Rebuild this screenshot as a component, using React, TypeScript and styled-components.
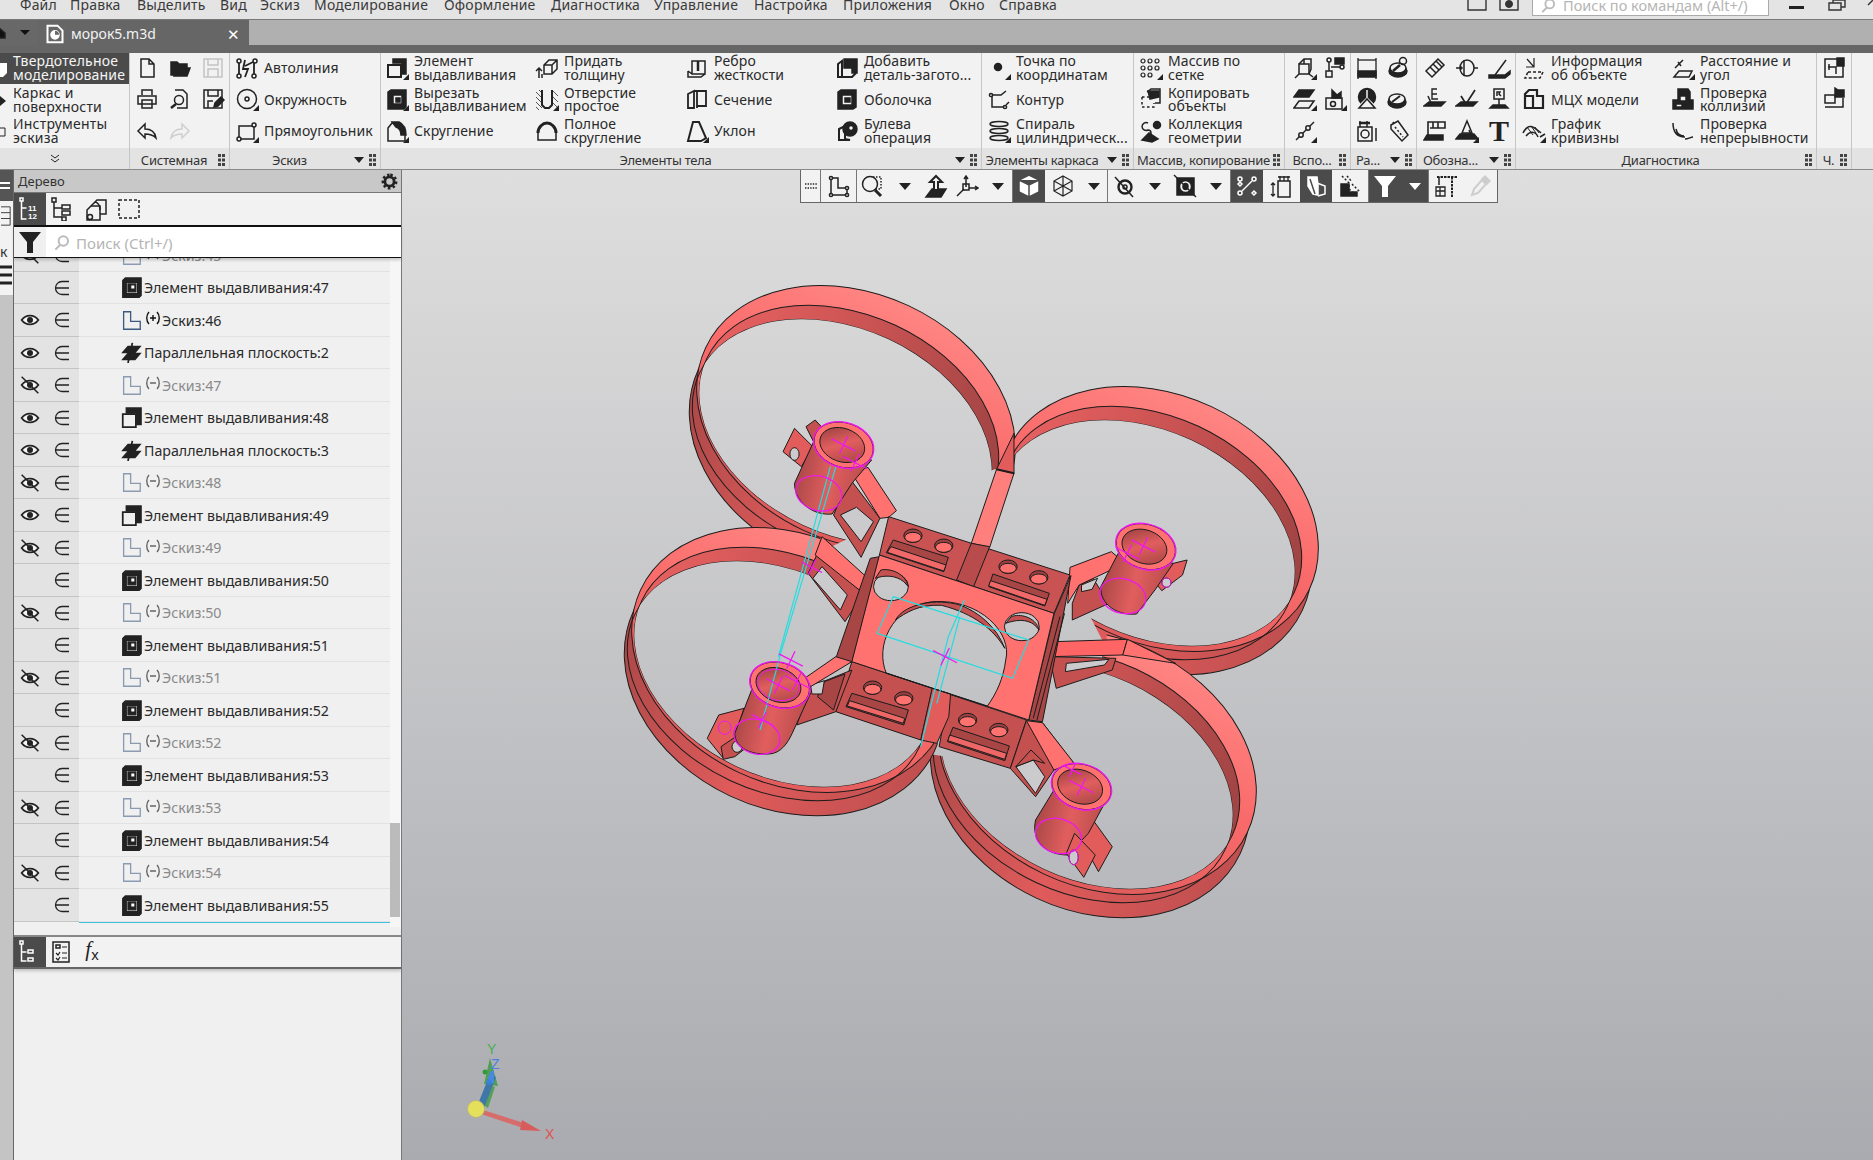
import React from 'react';
import styled, { createGlobalStyle } from 'styled-components';

const Global = createGlobalStyle`
  html, body { margin: 0; padding: 0; width: 1873px; height: 1160px; overflow: hidden; background: #f0f0f0; }
  body { font-family: "Noto Sans", "Open Sans", sans-serif; color: #222; }
`;

const FONT_STRETCH = '0.12px';

const Page = styled.div`
  width: 1873px; height: 1160px; display: flex; flex-direction: column; overflow: hidden;
`;
const MenuBar = styled.div`
  height: 19px; background: #e4e4e4; display: flex; align-items: flex-start; overflow: hidden; flex: none;
  border-bottom: 1px solid #777; padding-left: 20px; font-size: 14px;
`;
const MenuItem = styled.div<{ $w: number }>`
  width: ${p => p.$w}px; line-height: 20px; margin-top: -5px; color: #3a3a3a; white-space: nowrap; letter-spacing: 0.2px;
`;
const MenuRight = styled.div`
  margin-left: auto; display: flex; align-items: flex-start; height: 19px;
`;
const SysIcon = styled.svg<{ $mr: number; $w?: number }>`
  width: ${p => p.$w ?? 20}px; height: 11px; margin-right: ${p => p.$mr}px; flex: none;
`;
const CmdSearch = styled.div`
  width: 237px; height: 16px; box-sizing: border-box; background: #fff; border: 1px solid #aaa; border-top: 0; margin-right: 18px; display: flex; align-items: flex-end;
  font-size: 14.5px; color: #b5b5b5; padding-left: 8px; overflow: hidden; line-height: 20px; gap: 7px; white-space: nowrap;
`;
const TabStrip = styled.div`
  height: 25px; background: #b0b0b0; display: flex; flex: none;
`;
const TabHome = styled.div`
  width: 38px; background: #686868; display: flex; align-items: center; justify-content: space-between; padding: 0 8px 0 0; box-sizing: border-box;
`;
const Tab = styled.div`
  width: 211px; background: #666; color: #f2f2f2; display: flex; align-items: center; font-size: 14px; padding: 2px 9px 0 7px; box-sizing: border-box; gap: 6px;
`;
const TabClose = styled.span`
  margin-left: auto; font-size: 15px; color: #fff;
`;
const DarkStrip = styled.div`
  height: 8px; background: #666; flex: none;
`;
const Ribbon = styled.div`
  height: 116px; display: flex; background: #f2f2f2; flex: none; border-bottom: 1px solid #8a8a8a;
`;
const Group = styled.div<{ $w: number }>`
  width: ${p => p.$w}px; flex: none; display: flex; flex-direction: column; border-right: 1px solid #c6c6c6; box-sizing: border-box;
`;
const GroupBody = styled.div<{ $cols: string; $pad?: number }>`
  height: 96px; margin-top: -1px; display: grid; grid-template-rows: repeat(3, 31.5px); grid-auto-flow: column;
  grid-template-columns: ${p => p.$cols}; padding-left: ${p => p.$pad || 0}px;
`;
const GroupFooter = styled.div`
  height: 21px; box-sizing: border-box; padding-top: 2px; background: #e3e3e3; display: flex; align-items: center; font-size: 13px; color: #333; padding-right: 3px; letter-spacing: -0.25px;
`;
const FooterLabel = styled.div`
  flex: 1; text-align: center; white-space: nowrap; overflow: hidden;
`;
const Item = styled.div<{ $pad?: number }>`
  display: flex; align-items: center; gap: 5px; padding-left: ${p => p.$pad ?? 4}px; min-width: 0;
`;
const IconCell = styled.div`
  display: flex; align-items: center; justify-content: center;
`;
const ItemText = styled.div`
  font-size: 14px; line-height: 13.5px; color: #2a2a2a; white-space: pre-line; letter-spacing: ${FONT_STRETCH};
`;
const ModeCol = styled.div`
  width: 130px; flex: none; display: flex; flex-direction: column; border-right: 1px solid #c6c6c6; box-sizing: border-box;
`;
const ModeRow = styled.div<{ $on?: boolean }>`
  height: 31px; box-sizing: border-box; padding: 0 0 ${p => (p.$on ? 2 : 0)}px 13px; display: flex; align-items: center; font-size: 14px; line-height: 13.5px; white-space: pre-line; position: relative;
  background: ${p => (p.$on ? '#4b4b4b' : 'transparent')}; color: ${p => (p.$on ? '#f5f5f5' : '#2a2a2a')}; letter-spacing: 0.2px;
`;
const ModeChevrons = styled.div`
  margin-top: auto; height: 21px; background: #e3e3e3; display: flex; align-items: center; justify-content: center; padding-right: 20px;
`;
const ModeStub = styled.svg`
  position: absolute; left: 0; top: 9px; width: 7px; height: 16px;
`;
const RibbonRest = styled.div`
  flex: 1; display: flex; flex-direction: column; justify-content: flex-end;
`;
const RestFoot = styled.div`
  height: 21px; background: #e3e3e3;
`;
const Main = styled.div`
  flex: 1; display: flex; min-height: 0;
`;
const Gutter = styled.div`
  width: 13px; flex: none; background: #c4c4c4; border-right: 1px solid #666; display: flex; flex-direction: column;
`;
const GutterTop = styled.div`
  height: 31px; background: #555; display: flex; align-items: center;
`;
const GutterWhite = styled.div`
  height: 94px; background: #f2f2f2; display: flex; flex-direction: column; align-items: flex-start; font-size: 14px; color: #333; overflow: hidden;
`;
const GutterGlyph = styled.span`
  margin-top: 18px; line-height: 16px;
`;
const TreePanel = styled.div`
  width: 388px; flex: none; display: flex; flex-direction: column; background: #f0f0f0; border-right: 1px solid #777; box-sizing: border-box;
`;
const TreeHead = styled.div`
  height: 22px; background: #c8c8c8; border-bottom: 1px solid #777; display: flex; align-items: center; padding: 0 3px 0 4px; font-size: 13px; color: #333; justify-content: space-between; flex: none;
`;
const ToolRow = styled.div`
  height: 32px; display: flex; flex: none; background: #f2f2f2; gap: 0;
`;
const ToolBtn = styled.div<{ $on?: boolean; $w?: number }>`
  width: ${p => p.$w ?? 32}px; display: flex; align-items: center; justify-content: center; background: ${p => (p.$on ? '#4b4b4b' : 'transparent')}; color: ${p => (p.$on ? '#fff' : '#222')};
`;
const SearchRow = styled.div`
  height: 30px; flex: none; display: flex; border-top: 2px solid #111; border-bottom: 1px solid #111; box-shadow: 0 2px 3px rgba(0, 0, 0, .2); position: relative; z-index: 2;
`;
const FilterBox = styled.div`
  width: 32px; background: #f0f0f0; display: flex; align-items: center; justify-content: center;
`;
const SearchField = styled.div`
  flex: 1; background: #fff; display: flex; align-items: center; gap: 6px; padding: 2px 0 0 8px; color: #b4b4b4; font-size: 15px;
`;
const TreeList = styled.div`
  height: 669px; display: flex; flex: none; overflow: hidden;
`;
const Rows = styled.div`
  width: 376px; flex: none; display: flex; flex-direction: column; margin-top: -18.75px;
`;
const Row = styled.div`
  height: 32.5px; flex: none; box-sizing: border-box; display: flex; border-bottom: 1px solid #e2e2e2;
`;
const RowCtl = styled.div`
  width: 65px; flex: none; background: #e3e3e3; display: flex; align-items: center; margin-bottom: -1px; border-bottom: 1px solid #c4c4c4; padding-left: 6px; box-sizing: border-box; gap: 13px;
`;
const RowMain = styled.div<{ $dim?: boolean }>`
  flex: 1; display: flex; align-items: center; padding-left: 42px; color: ${p => (p.$dim ? '#8a8a8a' : '#2a2a2a')}; font-size: 14.2px; white-space: nowrap; gap: 2px;
`;
const Sign = styled.svg`
  width: 16px; height: 16px; margin-bottom: 4px; margin-left: 1px; margin-right: -1px;
`;
const EndLine = styled.div`
  height: 1px; margin-left: 65px; background: #3ec0dc; flex: none;
`;
const Track = styled.div`
  flex: 1; background: #f6f6f6; display: flex; flex-direction: column; justify-content: flex-end; padding-bottom: 10px;
`;
const Thumb = styled.div`
  height: 94px; width: 10px; background: #bbb;
`;
const TreeGap = styled.div`
  height: 8px; flex: none; border-bottom: 2px solid #888;
`;
const BottomTools = styled.div`
  height: 30px; flex: none; display: flex; background: #f2f2f2; border-bottom: 2px solid #666; box-shadow: 0 2px 3px rgba(0, 0, 0, .2);
`;
const Viewport = styled.div`
  flex: 1; position: relative; background: linear-gradient(#dedede, #aaabb0); overflow: hidden;
`;
const Canvas = styled.svg`
  display: block; width: 100%; height: 100%;
  .z * { vector-effect: non-scaling-stroke; }
`;
const FloatBar = styled.div`
  position: absolute; left: 398px; top: 0; height: 32px; display: flex; background: #f2f2f2; border: 1px solid #666; border-top: 0;
`;
const FloatBtn = styled.div<{ $w: number; $on?: boolean; $sep?: boolean }>`
  width: ${p => p.$w}px; box-sizing: border-box; display: flex; align-items: center; justify-content: center;
  background: ${p => (p.$on ? '#4b4b4b' : 'transparent')}; border-left: ${p => (p.$sep ? '1px solid #777' : '0')};
`;

const S = styled.svg<{ $s?: number }>`
  width: ${p => p.$s ?? 24}px; height: ${p => p.$s ?? 24}px; flex: none; fill: none; stroke: #222; stroke-width: 1.5; display: block;
`;
const BigT = styled.span`
  font-family: "Liberation Serif", serif; font-weight: 700; font-size: 30px; line-height: 24px; color: #222;
`;
const FxMark = styled.span`
  font-family: "Liberation Serif", serif; font-style: italic; font-size: 21px; line-height: 20px; color: #222;
  sub { font-style: normal; font-family: "Liberation Sans", sans-serif; font-size: 15px; vertical-align: -4px; }
`;

const K = '#222';
const icons: Record<string, React.ReactNode> = {
  doc: <path d="M6 3h8l5 5v13H6zM14 3v5h5" />,
  folder: <path fill={K} d="M3 6h6l2 2h8v3H9l-3 8H3zM9 12h13l-3 8H6z" />,
  saveG: <g stroke="#c4c4c4"><path d="M3 3h18v18H3zM7 3v6h10V3M7 21v-8h10v8" /></g>,
  print: <path d="M7 8V3h10v5M3 9h18v8H3zM7 13h10v8H7z" />,
  preview: <><path d="M7 3h8l4 4v14H9" /><circle cx="11" cy="13" r="4.5" /><path d="M8 17l-5 4" strokeWidth="2.5" /></>,
  saveAs: <><path d="M3 3h18v18H3zM7 3v6h10V3M7 21v-7h5" /><path fill={K} d="M13 20l1-4 6-6 3 3-6 6z" /></>,
  undo: <path d="M10 5L3 12l7 7v-4c5 0 8 1 11 4-1-6-5-9-11-9z" />,
  redo: <path stroke="#cfcfcf" d="M14 5l7 7-7 7v-4c-5 0-8 1-11 4 1-6 5-9 11-9z" />,
  autoline: <><circle cx="4" cy="20" r="2" /><circle cx="20" cy="5" r="2" /><circle cx="19" cy="20" r="2" /><circle cx="4" cy="5" r="2" /><path d="M4 7v11M18 6l-8 4M10 4L8 13h5l-3 8M19 7v11" strokeWidth="1.8" /></>,
  circle: <><circle cx="12" cy="12" r="9.5" /><circle cx="12" cy="12" r="2" /></>,
  rect: <><path d="M4 7h15v13H4z" /><circle cx="19" cy="6" r="2" fill="#f2f2f2" /><circle cx="4" cy="20" r="2" fill="#f2f2f2" /></>,
  extrude: <><path fill={K} d="M8 3h13v15h-4V7H8z" /><path strokeWidth="2" d="M3 9h13v12H3z" /></>,
  cut: <><path fill={K} d="M3 5l3-2h15v17l-2 2H3z" /><path fill="#f2f2f2" d="M8 8h9v9H8z" /><path fill={K} d="M11 11h4v4h-4z" /></>,
  fillet: <><path d="M3 9l4-5h7l6 12v6H3z" /><path fill={K} d="M7 3h7c4 2 7 7 7 13h-5c0-4-2-7-5-8z" /></>,
  thick: <><path d="M9 9l5-5h8v9l-5 5H9zM9 9h8v9M17 9l5-5" /><path d="M4 22V12M1 15l3-3 3 3M7 18v4" /></>,
  hole: <><path d="M1 5l6 6M1 10l6 6M1 15l6 6M1 20l3 3M4 3l3 3M17 3l6 6M17 9l6 6M17 15l6 6" strokeWidth="1" stroke="#555" /><path strokeWidth="2" d="M7 3v15l3 3h4l3-3V3" /></>,
  fullround: <><path strokeWidth="1.5" d="M3 21v-7c0-6 5-10 9-10s9 4 9 10v7z" /><path strokeWidth="3" d="M3 14c0-6 5-10 9-10s9 4 9 10" /></>,
  rib: <><path d="M7 5h13v13H7zM3 15l4 3M3 15v6h13l4-3M3 21" /><path d="M13 5v10" strokeWidth="2.5" /></>,
  section: <path strokeWidth="1.8" d="M3 7l6-3v17l-6 0zM9 4h12v15H12M12 4v17" />,
  draft: <path strokeWidth="2" d="M8 3h6l7 16-5 3H3z" />,
  addpart: <><path strokeWidth="2" d="M3 8l4-3v16H3zM7 21h10l4-4" /><path fill={K} d="M9 3h13v14h-5v-5H9z" /></>,
  shell: <><path fill={K} d="M3 5l3-2h15v17l-3 2H3z" /><path fill="#f2f2f2" d="M7 8h10v10H7z" /><path fill={K} d="M10 11h5v4h-5z" /></>,
  boolean: <><path strokeWidth="2" d="M4 10l6-3v13l5 1H4z" /><circle cx="15" cy="10" r="7" fill={K} /><circle cx="16" cy="9" r="2.5" fill="#f2f2f2" /></>,
  point: <circle cx="11" cy="11" r="3.5" fill={K} />,
  contour: <><circle cx="4" cy="8" r="1.6" /><circle cx="18" cy="20" r="1.6" /><path d="M6 8h8l5-4M5 9v11h11M19 18l3-3" /></>,
  spiral: <><ellipse cx="12" cy="5" rx="9" ry="2.5" /><ellipse cx="12" cy="12" rx="9" ry="2.5" /><ellipse cx="12" cy="19" rx="9" ry="2.5" /></>,
  grid: <g strokeWidth="1.2">{[4, 11, 18].map(x => [5, 12, 19].map(y => (x === 18 && y === 19 ? null : <circle key={`${x}${y}`} cx={x} cy={y} r="2" />)))}</g>,
  copy: <><path strokeDasharray="2.5 2.5" d="M3 10h7M3 10v10h12v-4" /><path strokeWidth="1.5" d="M8 5l4-3h9v14h-5" /><path fill={K} d="M9 4h11v6l-9 2z" /></>,
  coll: <><circle cx="18" cy="6" r="3.5" fill={K} /><path d="M9 4a4 4 0 1 0 0 7 3 3 0 1 1 0 6" /><path fill={K} d="M3 21l7-7 9 6-6 3z" /></>,
  axis1: <><path d="M6 8h10v10H6zM11 3l0 5M2 22l4-4M16 18l4 3" /><path d="M6 8l5-5h7v10l-2 5" /></>,
  branch: <><circle cx="6" cy="4" r="2" /><circle cx="19" cy="11" r="2" /><path d="M6 6v9M8 11h9" /><rect x="3" y="15" width="6" height="6" /><path fill={K} d="M12 2h9v6h-9z" /></>,
  planes: <><path fill={K} d="M6 3h15l-5 7H1z" /><path d="M6 14h15l-5 7H1z" /></>,
  csys: <><rect x="3" y="11" width="16" height="11" /><circle cx="10" cy="17" r="2.5" /><path fill={K} d="M9 3l5 5 4-3v6h-9z" /></>,
  line3: <><path d="M3 21L21 3" /><circle cx="8" cy="16" r="2.2" fill="#f2f2f2" /><circle cx="15" cy="9" r="2.2" fill="#f2f2f2" /></>,
  dim1: <><path d="M3 2v21M21 2v21" strokeWidth="1.3" /><path fill={K} d="M3 15h18v6H3z" /><path d="M3 4h18" strokeWidth="1.3" /></>,
  rough: <><ellipse cx="11" cy="15" rx="9" ry="6" fill={K} /><ellipse cx="11" cy="12" rx="8" ry="5" fill="#f2f2f2" /><path strokeWidth="2.5" d="M6 15l7-6" /><circle cx="16" cy="5" r="3.5" /></>,
  bolt: <><circle cx="12" cy="10" r="8.5" fill={K} /><path stroke="#f2f2f2" d="M12 3v8M12 11l-6 6M12 11l6 6" /><path strokeWidth="1.5" d="M4 21l8-9 8 9z" fill="#f2f2f2" /></>,
  radius: <><ellipse cx="10" cy="15" rx="9" ry="6" fill={K} /><ellipse cx="10" cy="12" rx="8" ry="5" fill="#f2f2f2" /><path strokeWidth="2" d="M5 15l8-6" /></>,
  size3: <><path d="M3 8h14v14H3zM5 2v6M12 2v6M21 9v13" /><path strokeWidth="2.5" d="M4 4h11" /><circle cx="10" cy="15" r="4" /></>,
  hatch: <><path d="M4 6l7-4 10 14-6 6L4 10z" /><path d="M8 8l8 10M7 3l-3 3" strokeDasharray="2 2" /></>,
  thread: <><path d="M3 15L15 3l6 6L9 21z" /><path d="M7 11l6 6M10 8l6 6M13 5l6 6" /></>,
  cyl: <><ellipse cx="12" cy="12" rx="7" ry="8" /><path d="M1 12h4M19 12h4M9 4v16" /><circle cx="6" cy="12" r="1" /></>,
  mark: <><path fill={K} d="M2 19h16l5-4v3l-5 4H2z" /><path d="M8 19L19 4" /></>,
  markE: <><path fill={K} d="M1 19h17l4-4H6z" /><path d="M9 18L5 9" /><path d="M14 2H9v10h6M9 7h5" strokeWidth="1.4" /></>,
  markV: <><path fill={K} d="M1 19h17l4-4H6z" /><path d="M6 9l5 8L20 3" strokeWidth="1.7" /></>,
  markR: <><path fill={K} d="M3 21l3-3h12l3 3z" /><path d="M12 18v-6M7 2h10v10H7z" /><path d="M10 9V5h3l-1 2 2 2" /></>,
  markH: <><path fill={K} d="M1 21l3-5h16v5z" /><path d="M5 16V3h17v6H7M10 3v6M15 3v6" strokeWidth="1.6" /></>,
  tri1: <><path fill={K} d="M1 20l4-5h14l4 5z" /><path d="M12 2l5 12H7z" fill="#f2f2f2" /><path d="M14 11l3 7" /></>,
  info: <><path d="M5 3l7 8M4 11h8v-9" strokeWidth="1.2" /><path strokeDasharray="3 2" d="M6 16h15l-3 6H3z" /></>,
  mass: <path strokeWidth="2.2" d="M3 7l4-4h8v6h6v12H3zM3 9h8v12" />,
  curv: <><path d="M1 14c6-12 12-5 18 0M4 17c5-6 10-4 12 1M18 18l5-3" /><path d="M5 8l6 8M9 7l5 7M13 8l4 6" strokeWidth="1" /></>,
  dist: <><path d="M3 21h15l3-6H8zM4 12l8-8M7 6l3 4" /></>,
  coll2: <><path fill={K} d="M7 2h10l2 3v8h3v9H2v-9h5z" /><path fill="#f2f2f2" d="M9 9h6v5H9z" /><path fill="#f2f2f2" d="M5 17h6v3H5z" /></>,
  cont: <path d="M2 4c0 9 4 14 12 14M22 18c-2 0-5 2-8 2M5 10c1 5 4 7 8 7" />,
  chT: <><path d="M3 3h18v18H3z" /><path fill={K} d="M15 2h7v8h-7z" /><path d="M6 11h8v7M7 8v6" /></>,
  chF: <><path d="M3 20h18v-9M3 8h10v8H3z" /><path fill={K} d="M13 1l3 2h6v7h-9z" /></>,
  sketch: <path d="M3 2h8v11h11v9H3z" stroke="#3b5a80" />,
  sketchD: <path d="M3 2h8v11h11v9H3z" stroke="#8a9ab0" />,
  feature: <><path fill={K} d="M2 4l3-3h18v20l-3 3H2z" /><path fill="#f2f2f2" d="M6 6h13v13H6z" /><path fill={K} d="M8 8h9v9H8z" /><path fill="#fff" d="M11 9h5v5h-5z" /></>,
  feature2: <><path fill={K} d="M6 1h17v19h-5V7H6z" /><path strokeWidth="2" d="M2 8h15v15H2z" /></>,
  plane: <><path fill={K} d="M2 12l6-7h14l-6 7zM2 20l6-7h14l-6 7z" /><path d="M13 1l-5 23" strokeWidth="2" /></>,
  treeA: <g stroke="#fff"><rect x="2" y="1" width="3" height="3" /><path d="M3.5 4v18h5M3.5 11h5" /><text x="10" y="14" fontSize="8" fontWeight="700" fill="#fff" stroke="none" fontFamily="'Liberation Sans', sans-serif">11</text><text x="10" y="22" fontSize="8" fontWeight="700" fill="#fff" stroke="none" fontFamily="'Liberation Sans', sans-serif">12</text></g>,
  treeB: <><rect x="2" y="1" width="4" height="4" /><path d="M4 5v15h8M4 11h8" /><rect x="12" y="8" width="8" height="4" /><rect x="12" y="14" width="8" height="4" /><rect x="12" y="20" width="4" height="4" /></>,
  treeC: <><path d="M7 9l6-6h9v14h-6" /><path d="M3 13l4-4h9v14H3z" /><path d="M11 5c4 1 5 5 5 8" /><circle cx="6" cy="20" r="2.5" /></>,
  treeD: <rect x="2" y="3" width="20" height="18" strokeDasharray="3 2" />,
  tab1: <g stroke="#fff"><rect x="2" y="1" width="3" height="3" /><path d="M3.5 4v17h5M3.5 12h5" /><rect x="10" y="10" width="5" height="3" /><rect x="10" y="18" width="5" height="3" /></g>,
  tab2: <><path d="M4 2h16v20H4z" /><rect x="7" y="5" width="4" height="3" /><path d="M13 7h5M7 13l2 2 2-3M13 13h5M7 18l2 2 2-3M13 18h5" strokeWidth="1.2" /></>,
  funnel: <path fill={K} stroke="none" d="M1 2h22l-8 10v11h-6V12z" />,
  funnelW: <path fill="#fff" stroke="none" d="M1 2h22l-8 10v11h-6V12z" />,
  fbSketch: <><circle cx="4" cy="4" r="1.6" /><circle cx="20" cy="21" r="1.6" /><circle cx="4" cy="21" r="1.6" /><circle cx="20" cy="14" r="1.6" /><path d="M4 6v13M6 21h12M20 16v3M18 14h-7V4H6" /></>,
  fbZoom: <><circle cx="9" cy="10" r="7.5" /><path strokeDasharray="1.5 1.5" d="M12 3h8v12h-6" /><path strokeWidth="3" d="M14 16l6 6" /></>,
  fbUp: <><path fill={K} d="M8 15h14l-5 8H2z" /><path strokeWidth="2" d="M10 15V8H6l6-6 6 6h-4v7" fill="#f2f2f2" /></>,
  fbAxes: <><path d="M11 2v11M9 5l2-3 2 3M14 14h9M20 12l3 2-3 2M9 15l-7 7" /><rect x="8" y="10" width="6" height="6" /></>,
  fbCube: <path fill="#fff" stroke="#4b4b4b" strokeWidth="1.5" d="M12 1l10 5v12l-10 5-10-5V6zM2 6l10 5 10-5M12 11v12" />,
  fbWire: <path strokeWidth="1.2" d="M12 2l9 5v10l-9 5-9-5V7zM3 7l18 10M21 7L3 17M12 2v20" />,
  fbEye: <><path d="M2 3l18 20" strokeWidth="1.5" /><circle cx="12" cy="13" r="6.5" strokeWidth="2.4" /><circle cx="12" cy="13" r="2" /></>,
  fbEyeB: <><path fill={K} d="M4 4h17v17H4z" /><ellipse cx="12.5" cy="12.5" rx="6" ry="6" fill="#f2f2f2" /><ellipse cx="12.5" cy="12.5" rx="2.5" ry="3" fill={K} /><path d="M1 1l22 22" /></>,
  fbNodes: <g stroke="#fff"><circle cx="5" cy="5" r="2" /><circle cx="19" cy="5" r="2" /><path d="M17 7L7 17" /><circle cx="5" cy="19" r="2" /><path d="M17 19l2-2 2 2-2 2z" /><path d="M3 10l2-2 2 2-2 2z" /></g>,
  fbDim: <><path d="M8 7h12v16H8z" /><path d="M8 3h12M10 2v5M14 2v5M18 2v5M3 9v13M1 11l2-2 2 2M1 20l2 2 2-2" strokeWidth="1.3" /></>,
  fbSolid: <g stroke="#fff"><path fill="#fff" d="M4 3h9l1 8v10L9 20 4 12z" /><path d="M13 9l8 3v8l-7 2" /><path stroke="#4b4b4b" d="M6 5l5 15" /></g>,
  fbLay: <><path fill={K} d="M3 10h8v8h8v4H3z" /><path strokeDasharray="2 2" d="M4 2l7 7v6l9 8M9 2l5 6" /><path d="M14 10l8 8" strokeDasharray="2 2" /></>,
  fbCrane: <><path strokeWidth="2" d="M3 3h20M18 3v20" strokeDasharray="2.5 1" /><path d="M5 3v8" /><path d="M2 13h9v9H2zM2 17h9M6 13v9" strokeWidth="1.3" /></>,
  fbPipe: <g stroke="#cdcdcd"><path strokeWidth="2" d="M4 21l2-6 8-9 4 4-8 9z" /><path fill="#cdcdcd" d="M14 5l3-3 5 5-3 3z" /></g>,
};

const Ico: React.FC<{ n: string; more?: boolean; s?: number }> = ({ n, more, s }) => (
  <S $s={s} viewBox="0 0 24 24">
    {icons[n]}
    {more && <path fill={K} stroke="none" d="M18 24l6-6v6z" />}
  </S>
);

const Tri = styled.span<{ $light?: boolean }>`
  width: 0; height: 0; border-left: 6px solid transparent; border-right: 6px solid transparent; border-top: 7px solid ${p => (p.$light ? '#fff' : '#222')}; display: block;
`;
const FootTri = styled(Tri)`
  border-left-width: 5px; border-right-width: 5px; border-top-width: 6px; margin: 0 5px; flex: none;
`;
const GripDots = styled.svg`
  width: 7px; height: 12px; flex: none; margin-right: 1px;
`;
const Grip = () => (
  <GripDots viewBox="0 0 7 12">
    {[0, 4].map(x => [0, 4.5, 9].map(y => <rect key={`${x}${y}`} x={x} y={y} width="3" height="3" fill="#444" />))}
  </GripDots>
);
const Foot: React.FC<{ t: string; drop?: boolean; grip?: boolean }> = ({ t, drop, grip = true }) => (
  <GroupFooter>
    <FooterLabel>{t}</FooterLabel>
    {drop && <FootTri />}
    {grip && <Grip />}
  </GroupFooter>
);

const IconItem: React.FC<{ n: string; more?: boolean }> = ({ n, more }) => (
  <IconCell>{n ? <Ico n={n} more={more} /> : null}</IconCell>
);
const TextItem: React.FC<{ n: string; t: string; more?: boolean; pad?: number }> = ({ n, t, more, pad }) => (
  <Item $pad={pad}>
    <Ico n={n} more={more} />
    <ItemText>{t}</ItemText>
  </Item>
);

const menu: [string, number][] = [
  ['Файл', 50], ['Правка', 67], ['Выделить', 83], ['Вид', 40], ['Эскиз', 54], ['Моделирование', 130], ['Оформление', 107],
  ['Диагностика', 103], ['Управление', 100], ['Настройка', 89], ['Приложения', 106], ['Окно', 50], ['Справка', 70],
];

type RowT = { t: string; kind: 'f' | 'f2' | 's' | 'p'; eye?: 'on' | 'off'; sign?: '+' | '-' };
const rows: RowT[] = [
  { t: 'Эскиз:45', kind: 's', eye: 'off', sign: '-' },
  { t: 'Элемент выдавливания:47', kind: 'f' },
  { t: 'Эскиз:46', kind: 's', eye: 'on', sign: '+' },
  { t: 'Параллельная плоскость:2', kind: 'p', eye: 'on' },
  { t: 'Эскиз:47', kind: 's', eye: 'off', sign: '-' },
  { t: 'Элемент выдавливания:48', kind: 'f2', eye: 'on' },
  { t: 'Параллельная плоскость:3', kind: 'p', eye: 'on' },
  { t: 'Эскиз:48', kind: 's', eye: 'off', sign: '-' },
  { t: 'Элемент выдавливания:49', kind: 'f2', eye: 'on' },
  { t: 'Эскиз:49', kind: 's', eye: 'off', sign: '-' },
  { t: 'Элемент выдавливания:50', kind: 'f' },
  { t: 'Эскиз:50', kind: 's', eye: 'off', sign: '-' },
  { t: 'Элемент выдавливания:51', kind: 'f' },
  { t: 'Эскиз:51', kind: 's', eye: 'off', sign: '-' },
  { t: 'Элемент выдавливания:52', kind: 'f' },
  { t: 'Эскиз:52', kind: 's', eye: 'off', sign: '-' },
  { t: 'Элемент выдавливания:53', kind: 'f' },
  { t: 'Эскиз:53', kind: 's', eye: 'off', sign: '-' },
  { t: 'Элемент выдавливания:54', kind: 'f' },
  { t: 'Эскиз:54', kind: 's', eye: 'off', sign: '-' },
  { t: 'Элемент выдавливания:55', kind: 'f' },
];

const EyeSlot = styled.div`
  width: 20px; height: 20px; flex: none;
`;
const Eye: React.FC<{ off?: boolean }> = ({ off }) => (
  <S $s={20} viewBox="0 0 24 24">
    <path d="M2 12c5-7 15-7 20 0-5 7-15 7-20 0z" strokeWidth="2.2" fill="#f5f5f5" />
    <circle cx="12" cy="12" r="3.6" fill={K} stroke="none" />
    {off && <path d="M2 2l20 20" strokeWidth="1.8" />}
  </S>
);
const Member = () => (
  <S $s={18} viewBox="0 0 18 18" style={{ strokeWidth: 1.3 }}>
    <path d="M16 2.5H9a6.5 6.5 0 0 0 0 13h7M2.5 9H16" />
  </S>
);

const TreeRow: React.FC<{ r: RowT }> = ({ r }) => {
  const dim = r.eye === 'off' && r.kind === 's';
  const n = r.kind === 'f' ? 'feature' : r.kind === 'f2' ? 'feature2' : r.kind === 'p' ? 'plane' : dim ? 'sketchD' : 'sketch';
  return (
    <Row>
      <RowCtl>
        <EyeSlot>{r.eye && <Eye off={r.eye === 'off'} />}</EyeSlot>
        <Member />
      </RowCtl>
      <RowMain $dim={dim}>
        <Ico n={n} s={21} />
        {r.sign && (
          <Sign viewBox="0 0 16 16" fill="none" stroke={dim ? '#666' : '#111'} strokeWidth="1.4">
            <path d="M4 2C1 5 1 11 4 14M12 2c3 3 3 9 0 12M5 8h6" />
            {r.sign === '+' && <path d="M8 5v6" />}
          </Sign>
        )}
        <span>{r.t}</span>
      </RowMain>
    </Row>
  );
};

/* ---------- 3D model drawing ---------- */
const RE = { a: 166, b: 124, ia: 157, ib: 110 };
const L = '#ff7270';
const M = '#e25c5c';
const D = '#c45050';
const DK = '#a84545';
const BG = '#cbcbce';
const ZT = 'translate(620 270) scale(0.4592 0.33333)';

const Ring: React.FC<{ id: string; x: number; y: number; hide: string }> = ({ id, x, y, hide }) => {
  const dx = -7;
  const dy = 14;
  const ell = (cx: number, cy: number, a: number, b: number, extra: any = {}) => (
    <ellipse cx={cx} cy={cy} rx={a} ry={b} transform={`rotate(25 ${cx} ${cy})`} {...extra} />
  );
  return (
    <g>
      <clipPath id={`${id}c`}>{ell(x + dx, y + dy, RE.ia, RE.ib)}</clipPath>
      <mask id={`${id}m`} maskUnits="userSpaceOnUse" x="402" y="170" width="1471" height="990">
        <rect x="402" y="170" width="1471" height="990" fill="#fff" />
        <g clipPath={`url(#${id}c)`}>{ell(x, y, RE.ia, RE.ib, { fill: '#000' })}</g>
        <g transform={ZT}><polygon points={hide} fill="#000" /></g>
      </mask>
      <g mask={`url(#${id}m)`} stroke="#1c1c1c" strokeWidth="1">
        {ell(x, y + 14, RE.a, RE.b + 3, { fill: 'url(#gOuter)' })}
        {ell(x + 7, y - 7, RE.a, RE.b, { fill: 'url(#gFace)' })}
        {ell(x, y, RE.ia, RE.ib, { fill: 'url(#gWall)' })}
        {ell(x + dx, y + dy, RE.ia, RE.ib, { fill: 'none' })}
      </g>
    </g>
  );
};

const Cross: React.FC<{ x: number; y: number; r?: number }> = ({ x, y, r = 26 }) => (
  <path d={`M${x - r} ${y - r * 0.7}L${x + r} ${y + r * 0.7}M${x + r * 0.35} ${y - r}L${x - r * 0.35} ${y + r}`} stroke="#f018f0" strokeWidth="1.3" fill="none" />
);
const Mag: React.FC<{ x: number; y: number; s?: number }> = ({ x, y, s = 1 }) => (
  <ellipse cx={x} cy={y} rx={74 * s} ry={61 * s} transform={`rotate(55 ${x} ${y})`} fill="none" stroke="#f018f0" strokeWidth="1.4" />
);
const Low: React.FC<{ x: number; y: number }> = ({ x, y }) => (
  <ellipse cx={x} cy={y} rx={56} ry={47} transform={`rotate(55 ${x} ${y})`} fill="none" stroke="#f018f0" strokeWidth="1.3" />
);
const Cap: React.FC<{ x: number; y: number }> = ({ x, y }) => (
  <g>
    <ellipse cx={x} cy={y} rx={73} ry={60} transform={`rotate(55 ${x} ${y})`} fill={L} />
    <ellipse cx={x - 3} cy={y} rx={56} ry={45} transform={`rotate(55 ${x - 3} ${y})`} fill="url(#gCyl)" />
  </g>
);

const Drone = () => (
  <Canvas viewBox="402 170 1471 990" preserveAspectRatio="none">
    <defs>
      <linearGradient id="gFace" x1="0" y1="0" x2="0" y2="1">
        <stop offset="0" stopColor="#ff8583" /><stop offset=".45" stopColor="#f96b6a" /><stop offset="1" stopColor="#e05b5b" />
      </linearGradient>
      <linearGradient id="gWall" x1="0" y1="0" x2="1" y2="0">
        <stop offset="0" stopColor="#e66060" /><stop offset=".45" stopColor="#c85252" /><stop offset="1" stopColor="#9f4343" />
      </linearGradient>
      <linearGradient id="gOuter" x1="0" y1="0" x2="1" y2="0">
        <stop offset="0" stopColor="#ac4848" /><stop offset=".5" stopColor="#e05b5b" /><stop offset="1" stopColor="#c04f4f" />
      </linearGradient>
      <linearGradient id="gCyl" x1="0" y1="0" x2="1" y2="0.2">
        <stop offset="0" stopColor="#9c4242" /><stop offset=".55" stopColor="#e25e5e" /><stop offset="1" stopColor="#b84c4c" />
      </linearGradient>
    </defs>

    <Ring id="r1" x={849} y={425} hide="460,830 815,598 905,612 905,1500 460,1500" />
    <Ring id="r2" x={1152} y={526} hide="858,400 858,590 1050,1110 1050,1600 600,1600 600,400" />
    <Ring id="r4" x={1090} y={769} hide="665,1450 1015,1530 1060,1120 1060,900 500,900 500,1450" />
    <Ring id="r3" x={784} y={667} hide="440,760 900,760 900,1420 690,1420 400,1190" />

    <g transform={ZT} stroke="#1c1c1c" strokeWidth="1" className="z">
      {/* beam to upper rings */}
      <polygon points="820,598 858,490 858,612" fill={M} />
      <polygon points="820,598 858,610 805,832 765,820" fill="#ff7f7d" />
      <path d="M820,598 L858,610" strokeWidth="2" />

      {/* upper left arm truss */}
      <polygon points="500,625 465,735 525,862 566,745" fill={D} />
      <polygon points="515,712 552,755 525,815 480,735" fill={BG} />
      <polygon points="505,610 540,592 602,722 585,742 566,745" fill={L} />

      {/* lower left upper arm */}
      <polygon points="430,850 410,910 490,1055 530,970" fill={D} />
      <polygon points="440,890 495,975 480,1020 420,925" fill={BG} />
      <polygon points="440,800 548,935 535,975 425,855" fill={L} />

      {/* upper right arm */}
      <polygon points="985,1050 1065,1000 1030,925 1000,945 985,1000" fill={D} />
      <polygon points="1005,945 1040,925 1028,958 1005,965" fill={BG} />
      <polygon points="980,892 1070,845 1100,880 1000,945 975,1000" fill={L} />

      {/* lower right arm */}
      <polygon points="935,1160 1080,1165 1072,1200 950,1255" fill={D} />
      <polygon points="972,1180 1065,1168 1055,1185 970,1205" fill={BG} />
      <polygon points="945,1115 1105,1108 1095,1155 935,1160" fill="#ff6564" />
      <polygon points="1105,1108 1210,1180 1095,1155" fill={L} />

      {/* side slivers */}
      <polygon points="545,865 470,1165 505,1178 565,860" fill={DK} />
      <polygon points="982,917 920,1355 890,1350 946,1030" fill={DK} />
      <path d="M958,1040 L900,1345M968,1030 L908,1350" />

      {/* front walls */}
      <polygon points="505,1175 680,1255 655,1410 470,1325" fill={D} />
      <polygon points="716,1272 885,1350 850,1495 695,1430" fill={D} />
      <polygon points="680,1255 720,1272 716,1340 690,1420 655,1410" fill={M} />
      {[[550, 1253], [618, 1285], [757, 1350], [825, 1380]].map(([x, y]) => (
        <g key={x}>
          <ellipse cx={x} cy={y} rx="20" ry="20" fill="#9a4040" />
          <ellipse cx={x} cy={y + 5} rx="18" ry="15" fill={L} />
        </g>
      ))}
      <polygon points="505,1270 628,1320 618,1365 492,1310" fill={DK} />
      <polygon points="500,1292 620,1345 617,1360 495,1308" fill="#ef6666" />
      <polygon points="725,1372 848,1428 838,1472 713,1415" fill={DK} />
      <polygon points="718,1395 842,1450 838,1468 714,1412" fill="#ef6666" />

      {/* front arms */}
      <polygon points="415,1250 505,1200 470,1325 385,1365" fill={D} />
      <polygon points="445,1235 490,1212 465,1320 430,1280" fill={DK} />
      <polygon points="415,1245 445,1232 440,1272 418,1272" fill={BG} />
      <polygon points="470,1160 505,1175 415,1250 405,1222" fill={L} />
      <polygon points="885,1352 920,1358 985,1475 945,1500 905,1580 850,1495" fill={D} />
      <polygon points="885,1352 920,1358 988,1478 945,1500" fill={L} />
      <polygon points="862,1490 900,1470 925,1520 905,1570" fill={BG} />
      <polygon points="862,1490 895,1440 925,1480 900,1470" fill={D} />

      {/* back wall */}
      <polygon points="585,740 980,915 945,1030 565,855" fill="#c95353" />
      <polygon points="733,930 770,950 805,830 765,820" fill="#b84b4b" />
      {[[638, 797], [705, 827], [845, 890], [912, 922]].map(([x, y]) => (
        <g key={x}>
          <ellipse cx={x} cy={y} rx="20" ry="20" fill="#9a4040" />
          <ellipse cx={x} cy={y + 5} rx="18" ry="15" fill={L} />
        </g>
      ))}
      <polygon points="595,810 715,862 705,905 580,848" fill={DK} />
      <polygon points="590,830 710,885 705,903 582,847" fill="#f06868" />
      <polygon points="812,912 935,970 925,1008 803,950" fill={DK} />
      <polygon points="807,932 930,988 925,1006 803,948" fill="#f06868" />

      {/* main plate */}
      <path
        fill={L}
        fillRule="evenodd"
        d="M565,855 L945,1030 L890,1350 L505,1175 Z
           M580,1210 C555,1130 590,1010 680,995 C785,985 855,1090 840,1170 C835,1225 820,1270 800,1308 Z
           M552,950 a38,42 0 1 0 76,0 a38,42 0 1 0 -76,0 Z
           M837,1070 a38,42 0 1 0 76,0 a38,42 0 1 0 -76,0 Z"
      />
      <path d="M568,900 C585,895 620,905 628,950 L618,935 C600,915 575,915 556,925 Z" fill={D} />
      <path d="M852,1040 C870,1030 905,1040 913,1080 L903,1065 C885,1045 860,1050 840,1060 Z" fill={D} />
      <path d="M600,1050 C620,1000 690,985 740,1005 C780,1025 820,1070 838,1135 C815,1080 770,1030 700,1006 C650,1002 620,1030 600,1050 Z" fill={D} />

      {/* top left motor */}
      <polygon points="355,545 380,475 420,530 395,590" fill={M} />
      <ellipse cx="380" cy="552" rx="10" ry="19" fill={BG} />
      <polygon points="405,470 425,450 452,490 425,525" fill={D} />
      <path d="M425,505 L380,640 C380,695 420,738 462,732 L505,640 L548,570 Z" fill="url(#gCyl)" />
      <Cap x={487} y={525} />
      {/* top right motor */}
      <polygon points="1205,880 1235,870 1225,915 1180,962 1160,930" fill={M} />
      <ellipse cx="1190" cy="938" rx="10" ry="14" fill={BG} />
      <path d="M1085,850 L1047,950 C1045,1000 1080,1038 1125,1032 L1165,960 L1205,880 Z" fill="url(#gCyl)" />
      <Cap x={1145} y={830} />
      {/* bottom left motor */}
      <polygon points="190,1405 215,1335 270,1315 250,1400 225,1465" fill={M} />
      <polygon points="220,1430 290,1365 310,1395 250,1460 225,1468" fill={D} />
      <ellipse cx="255" cy="1430" rx="11" ry="17" fill={BG} />
      <path d="M288,1255 L250,1390 C250,1425 275,1455 325,1452 C350,1450 365,1420 375,1390 L415,1270 Z" fill="url(#gCyl)" />
      <Cap x={348} y={1245} />
      {/* bottom right motor */}
      <polygon points="1030,1650 1072,1730 1042,1805 1000,1700" fill={M} />
      <path d="M945,1560 L905,1650 C895,1710 925,1755 975,1755 L1020,1690 L1065,1575 Z" fill="url(#gCyl)" />
      <polygon points="990,1690 1035,1755 1010,1822 972,1750" fill={M} />
      <ellipse cx="988" cy="1762" rx="10" ry="22" fill={BG} />
      <Cap x={1005} y={1550} />

      {/* sketch overlays */}
      <g fill="none" stroke="#22dde0" strokeWidth="1.2">
        <polygon points="595,980 890,1110 855,1225 560,1090" />
        <path d="M470,590 L350,1150 L305,1380M458,590 L345,1160" />
        <path d="M750,990 L715,1100 L680,1290 L655,1430M740,1040 L690,1300" />
      </g>
      <g>
        <Mag x={487} y={525} />
        <Low x={433} y={670} />
        <Cross x={487} y={525} /><Cross x={512} y={578} />
        <Mag x={1145} y={830} />
        <Low x={1095} y={978} />
        <Cross x={1140} y={828} /><Cross x={1105} y={850} />
        <ellipse cx="1190" cy="938" rx="10" ry="14" fill="none" stroke="#f018f0" />
        <Mag x={348} y={1245} />
        <ellipse cx="345" cy="1245" rx="50" ry="42" transform="rotate(55 345 1245)" fill="none" stroke="#f018f0" strokeWidth="1" />
        <Low x={298} y={1400} />
        <Cross x={345} y={1245} /><Cross x={372} y={1170} /><Cross x={385} y={1235} />
        <Cross x={418} y={892} r={22} />
        <Cross x={708} y={1160} r={26} />
        <Cross x={310} y={1350} r={24} />
        <ellipse cx="228" cy="1373" rx="14" ry="20" fill="none" stroke="#f018f0" />
        <Mag x={1005} y={1550} />
        <Low x={955} y={1698} />
        <Cross x={1005} y={1550} /><Cross x={985} y={1500} r={20} />
        <ellipse cx="988" cy="1762" rx="10" ry="22" fill="none" stroke="#f018f0" />
      </g>
    </g>

    {/* triad */}
    <g>
      <polygon points="482,1104 490,1085 495,1087 488,1108" fill="#58a058" />
      <polygon points="484,1084 490,1058 498,1086" fill="#4f9f55" />
      <polygon points="478,1104 490,1074 496,1077 484,1108" fill="#3f78a8" />
      <polygon points="488,1078 490,1072 494,1070 494,1083 489,1084" fill="#4a88e0" />
      <circle cx="489" cy="1082" r="2.5" fill="#3a80e0" />
      <circle cx="485" cy="1072" r="2.5" fill="#339a3a" />
      <polygon points="483,1110 524,1123 523,1128 481,1114" fill="#d66c6c" />
      <polygon points="522,1120 541,1131 520,1130" fill="#d85c5c" />
      <circle cx="476" cy="1109" r="8.5" fill="#e4e05c" stroke="#b4b070" strokeWidth="0.7" />
      <text x="545" y="1139" fontSize="14" fill="#e05050" fontFamily="'Liberation Sans', sans-serif">X</text>
      <text x="487" y="1054" fontSize="14" fill="#46b04e" fontFamily="'Liberation Sans', sans-serif">Y</text>
      <text x="491" y="1069" fontSize="14" fill="#4a80e0" fontFamily="'Liberation Sans', sans-serif">Z</text>
    </g>
  </Canvas>
);

export default function App() {
  return (
    <Page>
      <Global />
      <MenuBar>
        {menu.map(([t, w]) => <MenuItem key={t} $w={w}>{t}</MenuItem>)}
        <MenuRight>
          <SysIcon $mr={12} viewBox="0 0 20 11" fill="none" stroke="#333"><path d="M1 0v10h18V0" strokeWidth="1.4" /></SysIcon>
          <SysIcon $mr={13} viewBox="0 0 20 11" fill="none" stroke="#333"><path d="M1 0v10h18V0" strokeWidth="1.4" /><circle cx="10" cy="4" r="3.5" fill="#333" /></SysIcon>
          <CmdSearch>
            <S $s={15} viewBox="0 0 24 24" style={{ stroke: '#bbb', strokeWidth: 3, marginBottom: 1 }}><circle cx="14" cy="8" r="7" /><path d="M9 14l-7 7" /></S>
            <span>Поиск по командам (Alt+/)</span>
          </CmdSearch>
          <SysIcon $mr={20} viewBox="0 0 20 11"><rect x="2" y="6" width="15" height="3" fill="#222" /></SysIcon>
          <SysIcon $mr={20} viewBox="0 0 20 11" fill="none" stroke="#333" strokeWidth="1.4"><path d="M2 3h12v7H2zM6 3V0h12v7h-4" /></SysIcon>
          <SysIcon $mr={0} $w={6} viewBox="0 0 6 11" fill="none" stroke="#333" strokeWidth="1.4"><path d="M1 5l5-5" /></SysIcon>
        </MenuRight>
      </MenuBar>
      <TabStrip>
        <TabHome>
          <S $s={12} viewBox="0 0 12 12" style={{ marginLeft: -6 }}><path fill="#111" d="M0 6l5-5 6 5v5H0z" /></S>
          <Tri style={{ borderLeftWidth: 5, borderRightWidth: 5, borderTopWidth: 5, borderTopColor: '#111' }} />
        </TabHome>
        <Tab>
          <S $s={20} viewBox="0 0 24 24" style={{ stroke: '#fff' }}>
            <path d="M3 2h12l6 6v14H3z" strokeWidth="2.4" />
            <circle cx="12" cy="13" r="5" fill="#fff" />
            <path d="M12 13V8a5 5 0 0 1 5 5z" fill="#666" stroke="none" />
          </S>
          морок5.m3d
          <TabClose>✕</TabClose>
        </Tab>
      </TabStrip>
      <DarkStrip />
      <Ribbon>
        <ModeCol>
          <ModeRow $on>
            <ModeStub viewBox="0 0 7 16"><path fill="#fff" d="M0 1h7v10l-4 4H0z" /></ModeStub>
            {'Твердотельное\nмоделирование'}
          </ModeRow>
          <ModeRow>
            <ModeStub viewBox="0 0 7 16"><path fill="#222" d="M0 3l6 5-6 5z" /></ModeStub>
            {'Каркас и\nповерхности'}
          </ModeRow>
          <ModeRow>
            <ModeStub viewBox="0 0 7 16" fill="none" stroke="#222"><path d="M0 4h5v8H0" /></ModeStub>
            {'Инструменты\nэскиза'}
          </ModeRow>
          <ModeChevrons>
            <S $s={10} viewBox="0 0 10 10" style={{ strokeWidth: 1 }}><path d="M1 1l4 3 4-3M1 5l4 3 4-3" /></S>
          </ModeChevrons>
        </ModeCol>

        <Group $w={100}>
          <GroupBody $cols="33px 33px 33px">
            <IconItem n="doc" /><IconItem n="print" /><IconItem n="undo" />
            <IconItem n="folder" /><IconItem n="preview" /><IconItem n="redo" />
            <IconItem n="saveG" /><IconItem n="saveAs" /><IconItem n="" />
          </GroupBody>
          <Foot t="Системная" />
        </Group>

        <Group $w={151}>
          <GroupBody $cols="1fr">
            <TextItem pad={5} n="autoline" t="Автолиния" />
            <TextItem pad={5} n="circle" t="Окружность" more />
            <TextItem pad={5} n="rect" t="Прямоугольник" more />
          </GroupBody>
          <Foot t="Эскиз" drop />
        </Group>

        <Group $w={601}>
          <GroupBody $cols="150px 150px 150px 150px">
            <TextItem n="extrude" more t={'Элемент\nвыдавливания'} />
            <TextItem n="cut" more t={'Вырезать\nвыдавливанием'} />
            <TextItem n="fillet" more t="Скругление" />
            <TextItem n="thick" t={'Придать\nтолщину'} />
            <TextItem n="hole" more t={'Отверстие\nпростое'} />
            <TextItem n="fullround" t={'Полное\nскругление'} />
            <TextItem n="rib" t={'Ребро\nжесткости'} />
            <TextItem n="section" t="Сечение" />
            <TextItem n="draft" more t="Уклон" />
            <TextItem n="addpart" t={'Добавить\nдеталь-загото...'} />
            <TextItem n="shell" t="Оболочка" />
            <TextItem n="boolean" t={'Булева\nоперация'} />
          </GroupBody>
          <Foot t="Элементы тела" drop />
        </Group>

        <Group $w={152}>
          <GroupBody $cols="1fr">
            <TextItem pad={5} n="point" more t={'Точка по\nкоординатам'} />
            <TextItem pad={5} n="contour" t="Контур" />
            <TextItem pad={5} n="spiral" more t={'Спираль\nцилиндрическ...'} />
          </GroupBody>
          <Foot t="Элементы каркаса" drop />
        </Group>

        <Group $w={151}>
          <GroupBody $cols="1fr">
            <TextItem pad={5} n="grid" more t={'Массив по\nсетке'} />
            <TextItem pad={5} n="copy" t={'Копировать\nобъекты'} />
            <TextItem pad={5} n="coll" t={'Коллекция\nгеометрии'} />
          </GroupBody>
          <Foot t="Массив, копирование" />
        </Group>

        <Group $w={66}>
          <GroupBody $cols="30px 30px" $pad={5}>
            <IconItem n="axis1" more /><IconItem n="planes" more /><IconItem n="line3" more />
            <IconItem n="branch" /><IconItem n="csys" more /><IconItem n="" />
          </GroupBody>
          <Foot t="Вспо..." />
        </Group>

        <Group $w={66}>
          <GroupBody $cols="32px 32px">
            <IconItem n="dim1" /><IconItem n="bolt" /><IconItem n="size3" />
            <IconItem n="rough" /><IconItem n="radius" /><IconItem n="hatch" />
          </GroupBody>
          <Foot t="Ра..." drop />
        </Group>

        <Group $w={99}>
          <GroupBody $cols="32px 32px 32px" $pad={2}>
            <IconItem n="thread" /><IconItem n="markE" /><IconItem n="markH" />
            <IconItem n="cyl" /><IconItem n="markV" /><IconItem n="tri1" more />
            <IconItem n="mark" /><IconItem n="markR" />
            <IconCell><BigT>T</BigT></IconCell>
          </GroupBody>
          <Foot t="Обозна..." drop />
        </Group>

        <Group $w={301}>
          <GroupBody $cols="149px 152px">
            <TextItem pad={6} n="info" t={'Информация\nоб объекте'} />
            <TextItem pad={6} n="mass" t="МЦХ модели" />
            <TextItem pad={6} n="curv" more t={'График\nкривизны'} />
            <TextItem pad={6} n="dist" more t={'Расстояние и\nугол'} />
            <TextItem pad={6} n="coll2" t={'Проверка\nколлизий'} />
            <TextItem pad={6} n="cont" t={'Проверка\nнепрерывности'} />
          </GroupBody>
          <Foot t="Диагностика" />
        </Group>

        <Group $w={35}>
          <GroupBody $cols="1fr">
            <IconItem n="chT" /><IconItem n="chF" /><IconItem n="" />
          </GroupBody>
          <Foot t="Ч." />
        </Group>
        <RibbonRest><RestFoot /></RibbonRest>
      </Ribbon>

      <Main>
        <Gutter>
          <GutterTop><S $s={11} viewBox="0 0 11 11" style={{ stroke: '#fff', strokeWidth: 2 }}><path d="M0 3h10M0 8h10" /></S></GutterTop>
          <GutterWhite>
            <S $s={12} viewBox="0 0 12 24" style={{ height: 20, strokeWidth: 1, marginTop: 5 }}><path d="M0 1h11v22H0M0 8h11M0 15h11" /></S>
            <GutterGlyph>к</GutterGlyph>
            <S $s={12} viewBox="0 0 12 24" style={{ height: 24, marginTop: 4, strokeWidth: 3 }}><path d="M0 3h12M0 11h12M0 19h12" /></S>
          </GutterWhite>
        </Gutter>
        <TreePanel>
          <TreeHead>
            Дерево
            <S $s={17} viewBox="0 0 24 24" style={{ strokeWidth: 4 }}><circle cx="12" cy="12" r="6.5" /><path strokeWidth="3.5" strokeDasharray="3.5 3.3" d="M12 2.5a9.5 9.5 0 1 0 .01 0" /></S>
          </TreeHead>
          <ToolRow>
            <ToolBtn $on><Ico n="treeA" /></ToolBtn>
            <ToolBtn><Ico n="treeB" /></ToolBtn>
            <ToolBtn $w={35}><Ico n="treeC" /></ToolBtn>
            <ToolBtn><Ico n="treeD" /></ToolBtn>
          </ToolRow>
          <SearchRow>
            <FilterBox><Ico n="funnel" /></FilterBox>
            <SearchField>
              <S $s={16} viewBox="0 0 24 24" style={{ stroke: '#bbb', strokeWidth: 3 }}><circle cx="14" cy="9" r="7" /><path d="M9 15l-7 7" /></S>
              Поиск (Ctrl+/)
            </SearchField>
          </SearchRow>
          <TreeList>
            <Rows>
              {rows.map((r, i) => <TreeRow key={i} r={r} />)}
              <EndLine />
            </Rows>
            <Track><Thumb /></Track>
          </TreeList>
          <TreeGap />
          <BottomTools>
            <ToolBtn $on><Ico n="tab1" /></ToolBtn>
            <ToolBtn $w={30}><Ico n="tab2" /></ToolBtn>
            <ToolBtn><FxMark>f<sub>x</sub></FxMark></ToolBtn>
          </BottomTools>
        </TreePanel>
        <Viewport>
          <Drone />
          <FloatBar>
            <FloatBtn $w={19}>
              <S $s={12} viewBox="0 0 12 12" style={{ strokeWidth: 1.4, strokeDasharray: '1.4 1.2' }}><path d="M0 4h12M0 8h12" /></S>
            </FloatBtn>
            <FloatBtn $w={36} $sep><Ico n="fbSketch" /></FloatBtn>
            <FloatBtn $w={33} $sep><Ico n="fbZoom" /></FloatBtn>
            <FloatBtn $w={31}><Tri /></FloatBtn>
            <FloatBtn $w={31}><Ico n="fbUp" /></FloatBtn>
            <FloatBtn $w={32}><Ico n="fbAxes" /></FloatBtn>
            <FloatBtn $w={29}><Tri /></FloatBtn>
            <FloatBtn $w={33} $sep $on><Ico n="fbCube" /></FloatBtn>
            <FloatBtn $w={36}><Ico n="fbWire" /></FloatBtn>
            <FloatBtn $w={26}><Tri /></FloatBtn>
            <FloatBtn $w={34} $sep><Ico n="fbEye" /></FloatBtn>
            <FloatBtn $w={28}><Tri /></FloatBtn>
            <FloatBtn $w={32}><Ico n="fbEyeB" /></FloatBtn>
            <FloatBtn $w={29}><Tri /></FloatBtn>
            <FloatBtn $w={33} $sep $on><Ico n="fbNodes" /></FloatBtn>
            <FloatBtn $w={37}><Ico n="fbDim" /></FloatBtn>
            <FloatBtn $w={32} $on><Ico n="fbSolid" /></FloatBtn>
            <FloatBtn $w={36}><Ico n="fbLay" /></FloatBtn>
            <FloatBtn $w={33} $sep $on><Ico n="funnelW" /></FloatBtn>
            <FloatBtn $w={27} $on><Tri $light /></FloatBtn>
            <FloatBtn $w={35} $sep><Ico n="fbCrane" /></FloatBtn>
            <FloatBtn $w={34}><Ico n="fbPipe" /></FloatBtn>
          </FloatBar>
        </Viewport>
      </Main>
    </Page>
  );
}
